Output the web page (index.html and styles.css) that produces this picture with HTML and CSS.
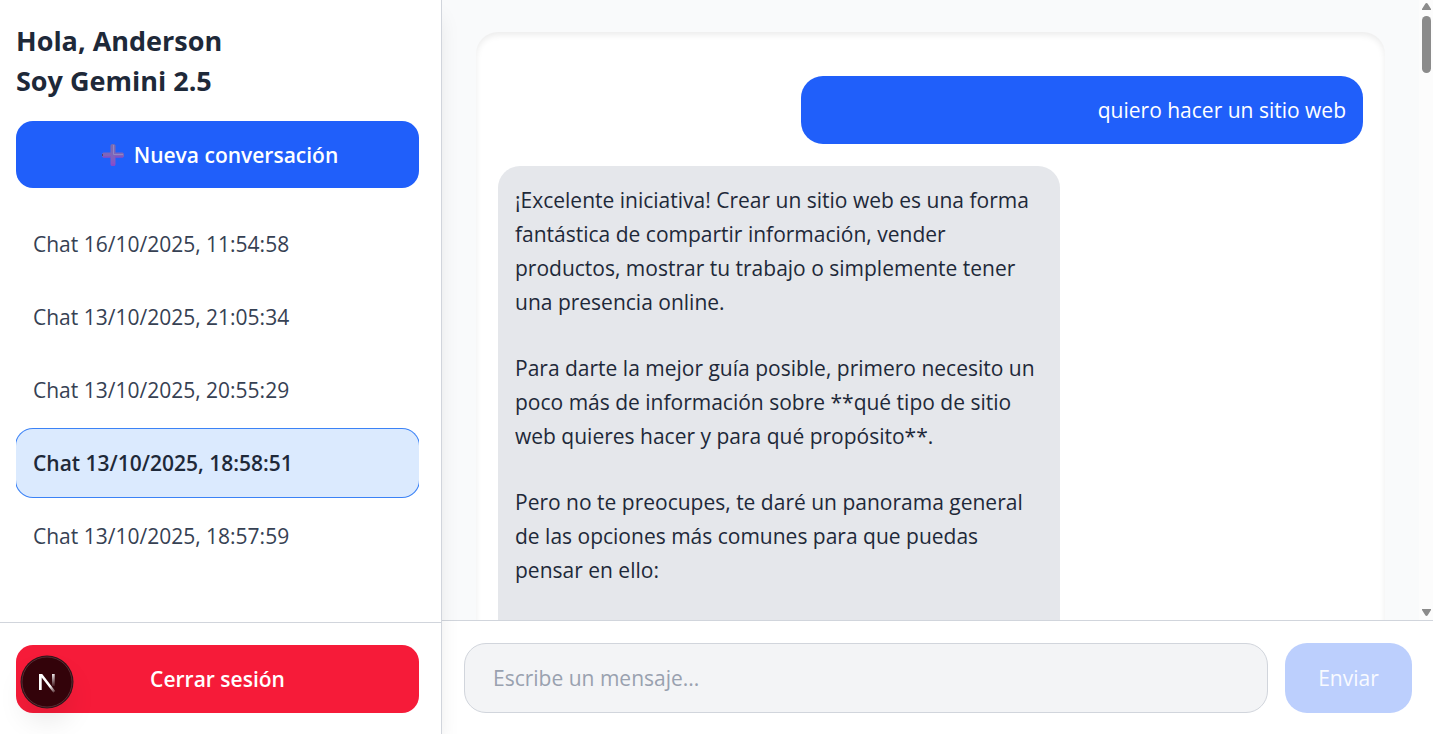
FILE: index.html
```html
<!DOCTYPE html>
<html lang="es">
<head>
<meta charset="utf-8">
<meta name="viewport" content="width=device-width, initial-scale=1">
<title>Chat Gemini</title>
<link rel="stylesheet" href="styles.css">
</head>
<body>
<div class="app">
  <aside class="sidebar">
    <div class="sidebar-top">
      <h1 class="greeting">Hola, Anderson<br>Soy Gemini 2.5</h1>
      <button class="btn btn-new" type="button">
        <svg class="plus" viewBox="0 0 22 22" aria-hidden="true">
          <defs>
            <linearGradient id="plusFill" x1="0" y1="0" x2="0" y2="1">
              <stop offset="0" stop-color="#7b6cae"/>
              <stop offset="0.6" stop-color="#7f63bd"/>
              <stop offset="1" stop-color="#8a4bcb"/>
            </linearGradient>
          </defs>
          <path fill="url(#plusFill)" d="M8.500 1.500Q8.500 0 11 0t2.500 1.500v7h7Q22 8.500 22 11t-1.500 2.500h-7v7Q13.500 22 11 22t-2.500-1.500v-7h-7Q0 13.500 0 11t1.500-2.500h7z"/>
          <path d="M1 13h8M13 13h8M9.500 21h3" stroke="#8546cc" fill="none"/>
          <path d="M11.500 1v9.500H21" stroke="#9186c4" fill="none"/>
          <path d="M.5 10v2" stroke="#54436b" fill="none"/>
        </svg>
        Nueva conversación
      </button>
    </div>
    <nav class="chats" aria-label="Conversaciones">
      <button class="chat" type="button">Chat 16/10/2025, 11:54:58</button>
      <button class="chat" type="button">Chat 13/10/2025, 21:05:34</button>
      <button class="chat" type="button">Chat 13/10/2025, 20:55:29</button>
      <button class="chat chat-active" type="button" aria-current="true">Chat 13/10/2025, 18:58:51</button>
      <button class="chat" type="button">Chat 13/10/2025, 18:57:59</button>
    </nav>
    <div class="sidebar-footer">
      <button class="btn btn-logout" type="button">Cerrar sesión</button>
    </div>
  </aside>

  <main class="main">
    <div class="viewport">
      <div class="scroll">
        <section class="card">
          <div class="bubble bubble-user">quiero hacer un sitio web</div>
          <div class="bubble bubble-bot">
            <p>¡Excelente iniciativa! Crear un sitio web es una forma<br>fantástica de compartir información, vender<br>productos, mostrar tu trabajo o simplemente tener<br>una presencia online.</p>
            <p>Para darte la mejor guía posible, primero necesito un<br>poco más de información sobre **qué tipo de sitio<br>web quieres hacer y para qué propósito**.</p>
            <p>Pero no te preocupes, te daré un panorama general<br>de las opciones más comunes para que puedas<br>pensar en ello:</p>
          </div>
        </section>
      </div>
      <div class="scrollbar" aria-hidden="true">
        <svg class="arrow" viewBox="0 0 9 7"><path d="M4.500 0Q5.200 0 5.700.8L9 6v1H0V6L3.300.8Q3.800 0 4.500 0z" fill="#8b8b8b"/></svg>
        <div class="track"><div class="thumb"></div></div>
        <svg class="arrow" viewBox="0 0 9 7"><path d="M4.500 7Q3.800 7 3.300 6.200L0 1V0h9v1L5.700 6.200Q5.200 7 4.500 7z" fill="#8b8b8b"/></svg>
      </div>
    </div>
    <form class="composer">
      <input class="message" type="text" placeholder="Escribe un mensaje..." aria-label="Escribe un mensaje">
      <button class="send" type="submit" disabled>Enviar</button>
    </form>
  </main>
</div>

<button class="devtools" type="button" aria-label="Next.js">
  <svg viewBox="0 0 54 54" aria-hidden="true">
    <defs>
      <linearGradient id="diag" gradientUnits="userSpaceOnUse" x1="28" y1="28" x2="35" y2="38">
        <stop offset="0.3" stop-color="#fff"/>
        <stop offset="1" stop-color="#fff" stop-opacity="0.1"/>
      </linearGradient>
      <linearGradient id="stem" gradientUnits="userSpaceOnUse" x1="33" y1="19" x2="33" y2="31">
        <stop offset="0" stop-color="#fff" stop-opacity="0.9"/>
        <stop offset="1" stop-color="#fff" stop-opacity="0.1"/>
      </linearGradient>
    </defs>
    <circle cx="27" cy="27" r="26.500" fill="#2e1419"/>
    <circle cx="27" cy="27" r="25" fill="#33030a" stroke="#572a31"/>
    <path d="M19 19h3.200L35.200 36l-1.800 1.800L21.700 22.500V35H19z" fill="url(#diag)"/>
    <path d="M32 19h2.700v12H32z" fill="url(#stem)"/>
  </svg>
</button>
</body>
</html>
```
FILE: styles.css
```css
* {
  box-sizing: border-box;
}

body {
  margin: 0;
  font-family: "Open Sans", "Noto Sans", sans-serif;
  font-size: 21px;
  line-height: 34px;
  color: #1e2939;
  background: #f9fafb;
}

button,
input {
  font: inherit;
}

button {
  border: 0;
  cursor: pointer;
}

.app {
  display: flex;
  height: 100vh;
}

/* Sidebar */
.sidebar {
  position: relative;
  z-index: 1;
  flex: 0 0 442px;
  display: flex;
  flex-direction: column;
  background: #fff;
  border-right: 1px solid #d1d5dc;
  box-shadow: 0 14px 21px -4px rgba(0, 0, 0, 0.1);
}

.sidebar-top {
  padding: 21px 22px 0 16px;
}

.greeting {
  margin: 0 0 20px;
  font-size: 27px;
  line-height: 40px;
  font-weight: 700;
}

.btn {
  display: flex;
  align-items: center;
  justify-content: center;
  width: 100%;
  padding: 17px;
  border-radius: 17px;
  color: #fff;
}

.btn-new {
  gap: 10px;
  padding: 17px 17px 16px 22px;
  background: #205ffa;
  font-weight: 600;
}

.plus {
  width: 22px;
  height: 22px;
}

.chats {
  flex: 1;
  display: flex;
  flex-direction: column;
  gap: 5px;
  margin: 22px 22px 0 16px;
  overflow: hidden;
}

.chat {
  flex: none;
  padding: 17px;
  border-radius: 17px;
  background: transparent;
  color: #364153;
  text-align: left;
}

.chat-active {
  background: #dbeafe;
  box-shadow: 0 0 0 1px #3b82f6;
  color: #1e2939;
  font-weight: 600;
}

.sidebar-footer {
  padding: 22px 22px 21px 16px;
  border-top: 1px solid #d1d5dc;
}

.btn-logout {
  background: #f61b39;
  font-weight: 600;
}

/* Conversation */
.main {
  flex: 1;
  min-width: 0;
  display: flex;
  flex-direction: column;
}

.viewport {
  flex: 1;
  min-height: 0;
  display: flex;
}

.scroll {
  flex: 1;
  padding: 32px 34px 0;
  overflow: hidden;
}

.card {
  display: flex;
  flex-direction: column;
  gap: 22px;
  min-height: 100%;
  padding: 44px 22px 22px;
  border-radius: 22px;
  background: #fff;
  box-shadow: inset 0 3px 6px rgba(0, 0, 0, 0.08);
}

.bubble {
  width: 65%;
  padding: 17px;
  border-radius: 22px;
}

.bubble-user {
  align-self: flex-end;
  background: #205ffa;
  color: #fff;
  text-align: right;
}

.bubble-bot {
  align-self: flex-start;
  padding-bottom: 64px;
  background: #e5e7eb;
  white-space: nowrap;
}

.bubble-bot p {
  margin: 0 0 32px;
}

.scrollbar {
  flex: 0 0 14px;
  display: flex;
  flex-direction: column;
  align-items: center;
  gap: 6px;
  padding: 3px 0 4px;
  background: #fcfcfc;
}

.arrow {
  width: 9px;
  height: 7px;
}

.track {
  flex: 1;
}

.thumb {
  width: 9px;
  height: 57px;
  border-radius: 5px;
  background: #8b8b8b;
}

.composer {
  display: flex;
  gap: 17px;
  padding: 22px 21px 21px 22px;
  border-top: 1px solid #d1d5dc;
  background: #fff;
}

.message {
  flex: 1;
  min-width: 0;
  padding: 17px 28px;
  border: 1px solid #d1d5dc;
  border-radius: 22px;
  background: #f3f4f6;
  color: #1e2939;
}

.message::placeholder {
  color: #99a1af;
  opacity: 1;
}

.send {
  flex: 0 0 127px;
  padding: 18px 0;
  border-radius: 22px;
  background: #bccffd;
  color: #f8faff;
  font-weight: 500;
}

/* Floating dev indicator */
.devtools {
  position: fixed;
  left: 20px;
  bottom: 25px;
  z-index: 2;
  width: 54px;
  height: 54px;
  padding: 0;
  border-radius: 50%;
  background: none;
  box-shadow: 0 16px 32px -8px rgba(0, 0, 0, 0.14);
}

.devtools svg {
  display: block;
}
```
